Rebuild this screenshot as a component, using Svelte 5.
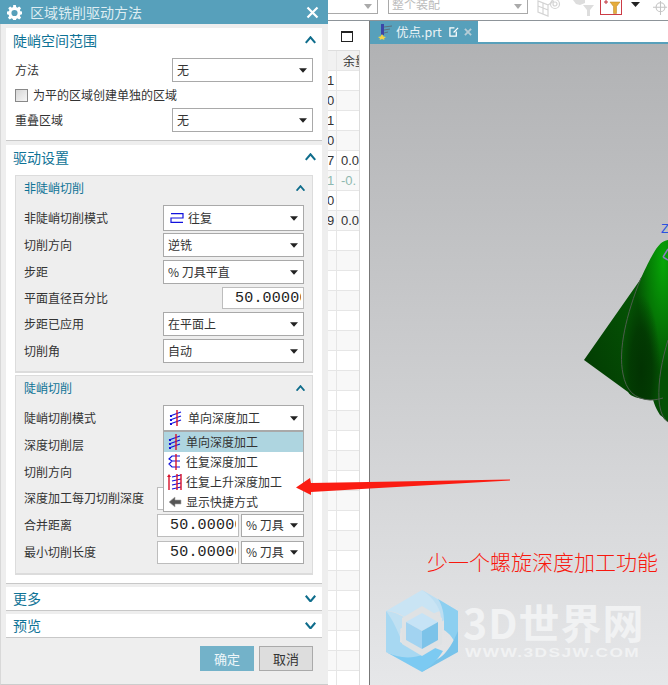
<script>
  // table rows beside the dialog
  const cells = [
    ['1', ''], ['0', ''], ['1', ''], ['0', ''],
    ['7', '0.0'], ['1', '-0.'], ['0', ''], ['9', '0.0']
  ];
  const rows = Array.from({ length: 31 }, (_, i) => cells[i] || ['', '']);
  const menu = ['单向深度加工', '往复深度加工', '往复上升深度加工', '显示快捷方式'];
</script>

{#snippet caret()}
  <svg class="caret" width="8" height="5" viewBox="0 0 9 5"><path d="M0 0h9L4.500 5z" fill="#222" /></svg>
{/snippet}

{#snippet chevron(up, size)}
  <svg width={size} height={size * 0.7} viewBox="0 0 10 7" fill="none" stroke="#0f6d8c" stroke-width="1.900">
    <path d={up ? 'M.7 6.300 5 1.200l4.300 5.100' : 'M.7.7 5 5.800 9.300.7'} />
  </svg>
{/snippet}

{#snippet deepIcon(kind)}
  <svg class="mode" width="16" height="18" viewBox="0 0 16 18" fill="none">
    {#if kind === 0}
      <path d="M2 7 13 3M2 11l11-4M2 15l11-4" stroke="#1111dd" stroke-width="1.300" />
      <path d="M2 7h2M2 11h2M2 15h2" stroke="#1111dd" stroke-width="2" />
      <path d="M9 1v16" stroke="#d8112a" stroke-width="1.400" />
    {:else if kind === 1}
      <path d="M13 3H5L2 6l3 2h8M13 8H5l-3 3 3 3h8" stroke="#1111dd" stroke-width="1.200" />
      <path d="M9 1v16" stroke="#d8112a" stroke-width="1.400" />
    {:else if kind === 2}
      <path d="M5 4l9-2M5 8l9-2M5 12l9-2M5 16l9-2" stroke="#1111dd" stroke-width="1.200" />
      <path d="M2 17V3M10 1v16M14 1v16" stroke="#d8112a" stroke-width="1.400" />
      <path d="M0 4l2-3 2 3z" fill="#d8112a" />
    {:else}
      <path d="M2 9l6-5v3h6v4H8v3z" fill="#555" stroke="#aaa" stroke-width=".6" />
    {/if}
  </svg>
{/snippet}

{#snippet select(text, cls = '')}
  <div class="select {cls}"><span class="val">{text}</span>{@render caret()}</div>
{/snippet}

<div class="screen">
  <div class="dialog">
    <header class="title">
      <svg width="15" height="15" viewBox="0 0 16 16">
        <path fill="#fff" fill-rule="evenodd" d="M6.600 0h2.800l.4 2.200 1.300.6L13 1.500l2 2-1.300 1.900.6 1.300 2.200.4v2.800l-2.200.4-.6 1.300L15 13.500l-2 2-1.900-1.300-1.300.6-.4 2.200H6.600l-.4-2.200-1.300-.6L3 15.500l-2-2 1.300-1.900-.6-1.300L-.2 9.900V7.100l2.200-.4.6-1.300L1.300 3.500l2-2 1.900 1.300 1.300-.6zM8 5.200a3.300 3.300 0 1 0 0 6.600 3.300 3.300 0 0 0 0-6.600z" />
      </svg>
      <span class="title-text">区域铣削驱动方法</span>
      <svg class="close" width="13" height="13" viewBox="0 0 13 13"><path d="M1.500 1.500l10 10M11.500 1.500l-10 10" stroke="#fff" stroke-width="2.200" /></svg>
    </header>

    <section class="card first">
      <div class="head"><span>陡峭空间范围</span>{@render chevron(true, 11)}</div>
      <div class="rows">
        <div class="row"><label>方法</label>{@render select('无')}</div>
        <div class="row check"><span class="box"></span><span>为平的区域创建单独的区域</span></div>
        <div class="row"><label>重叠区域</label>{@render select('无')}</div>
      </div>
    </section>

    <section class="card second">
      <div class="head"><span>驱动设置</span>{@render chevron(true, 11)}</div>

      <div class="group">
        <div class="group-head"><span>非陡峭切削</span>{@render chevron(true, 9)}</div>
        <div class="row tall">
          <label>非陡峭切削模式</label>
          <div class="select">
            <svg class="mode wave" width="14" height="10" viewBox="0 0 14 10" fill="none" stroke="#1111dd" stroke-width="1.200"><path d="M1 .6H13V5H1V9.400H13" /></svg>
            <span class="val">往复</span>{@render caret()}
          </div>
        </div>
        <div class="row"><label>切削方向</label>{@render select('逆铣')}</div>
        <div class="row"><label>步距</label>{@render select('% 刀具平直')}</div>
        <div class="row short"><label>平面直径百分比</label><input class="num wide" readonly value="50.000000" /></div>
        <div class="row"><label>步距已应用</label>{@render select('在平面上')}</div>
        <div class="row"><label>切削角</label>{@render select('自动')}</div>
      </div>

      <div class="group steep">
        <div class="group-head"><span>陡峭切削</span>{@render chevron(true, 9)}</div>
        <div class="row tall">
          <label>陡峭切削模式</label>
          <div class="select">{@render deepIcon(0)}<span class="val">单向深度加工</span>{@render caret()}</div>
        </div>
        <div class="row"><label>深度切削层</label></div>
        <div class="row"><label>切削方向</label></div>
        <div class="row mt"><label>深度加工每刀切削深度</label><input class="num" readonly value="50.000000" /><span class="pad"></span></div>
        <div class="row mt"><label>合并距离</label><input class="num" readonly value="50.000000" />{@render select('% 刀具', 'unit')}</div>
        <div class="row mt"><label>最小切削长度</label><input class="num" readonly value="50.000000" />{@render select('% 刀具', 'unit')}</div>

        <ul class="menu">
          {#each menu as item, i}
            <li class:on={i === 0}>{@render deepIcon(i)}<span>{item}</span></li>
          {/each}
        </ul>
      </div>
    </section>

    <section class="card fold"><div class="head"><span>更多</span>{@render chevron(false, 11)}</div></section>
    <section class="card fold"><div class="head"><span>预览</span>{@render chevron(false, 11)}</div></section>

    <footer class="actions">
      <button class="ok">确定</button>
      <button class="cancel">取消</button>
    </footer>
  </div>

  <div class="right">
    <div class="toolbar">
      <div class="tb-select first-sel"><span class="tb-caret"></span></div>
      <div class="tb-select second-sel"><span class="tb-text">整个装配</span><span class="tb-caret"></span></div>
      <svg class="tb-icon one" width="26" height="17" viewBox="0 0 26 17" fill="none" stroke="#d4d4d4" stroke-width="1.200">
        <path d="M2 1v11l10 4V5zM2 6l10 4M7 3v11M12 5l6-4" /><circle cx="19" cy="4" r="4.500" /><circle cx="19" cy="4" r="2" />
      </svg>
      <svg class="tb-icon two" width="24" height="17" viewBox="0 0 24 17">
        <path d="M1 0h12v3l-5 2-4-1z" fill="#ddd" /><path d="M11 5h11l-4 5v6h-3v-6z" fill="#ddd" />
      </svg>
      <div class="filter">
        <svg width="20" height="14" viewBox="0 0 20 14">
          <path d="M4 0v4M2 2h4" stroke="#c0303a" stroke-width="1" /><path d="M8 2h10l-3.500 4.500v7h-3v-7z" fill="#e6ad3c" stroke="#b98420" stroke-width=".5" />
        </svg>
      </div>
      <svg class="tb-icon three" width="9" height="5" viewBox="0 0 9 5"><path d="M0 0h9L4.500 5z" fill="#222" /></svg>
      <svg class="tb-icon four" width="15" height="17" viewBox="0 0 17 17" fill="none" stroke="#c4c4c4" stroke-width="1.200">
        <circle cx="8.500" cy="7" r="5" /><path d="M8.500 0v16M0 7h16" />
      </svg>
    </div>

    <div class="lower">
      <div class="side">
        <div class="side-top"><span class="maxi"></span></div>
        <div class="table">
          <div class="t-row t-head"><div class="c1"></div><div class="c2"><span>余量</span></div></div>
          {#each rows as r, i}
            <div class="t-row" class:alt={i % 2 === 1} class:dim={i === 5}>
              <div class="c1"><span>{r[0]}</span></div>
              <div class="c2"><span>{r[1]}</span></div>
            </div>
          {/each}
        </div>
      </div>

      <div class="view">
        <div class="tabs">
          <div class="tab">
            <svg width="17" height="17" viewBox="0 0 17 17">
              <path d="M5 1h3v11H5z" fill="#3c46a8" /><path d="M8 4l8-1M8 7l6-1M8 10l4-1" stroke="#5b6f7c" stroke-width="1" />
              <path d="M6 11l1.500 2.500L10 14l-2 1.500.5 1.500L6 16l-2.500 1 .5-1.500L2 14l2.500-.5z" fill="#f2d544" />
            </svg>
            <span class="tab-name">优点.prt</span>
            <svg width="10" height="10" viewBox="0 0 11 11" fill="none" stroke="#fff" stroke-width="1.400"><path d="M8 5v5H1V1h5M5 6l5-5" /></svg>
            <svg class="tab-x" width="8" height="8" viewBox="0 0 9 9"><path d="M1 1l7 7M8 1L1 8" stroke="#b7cdd6" stroke-width="2" /></svg>
          </div>
        </div>
        <div class="canvas">
          <!-- 3D part, placed on the free canvas -->
          <svg class="model" width="108" height="240" viewBox="0 0 108 240">
            <defs>
              <radialGradient id="lobe" cx="0.9" cy="0.12" r="0.6">
                <stop offset="0" stop-color="#07a607" />
                <stop offset="0.55" stop-color="#057a05" />
                <stop offset="1" stop-color="#045004" />
              </radialGradient>
              <linearGradient id="flat" x1="1" y1="0" x2="0" y2="1">
                <stop offset="0" stop-color="#066406" />
                <stop offset="1" stop-color="#023602" />
              </linearGradient>
              <radialGradient id="shade" cx="0.42" cy="0.72" r="0.42">
                <stop offset="0" stop-color="#023302" stop-opacity="1" />
                <stop offset="0.55" stop-color="#023302" stop-opacity="0.75" />
                <stop offset="1" stop-color="#023302" stop-opacity="0" />
              </radialGradient>
            </defs>
            <path d="M24 160 108 40V221L100 215C88 196 90 180 108 190L98 198C86 200 72 199 68 192z" fill="url(#flat)" />
            <path d="M81 78C66 115 58 150 63 174 66 190 74 199 90 200 96 200 99 199 103 198 100 215 102 218 108 222V40C100 41 95 48 81 78z" fill="url(#lobe)" />
            <path d="M81 78C66 115 58 150 63 174 66 190 74 199 90 200 96 200 99 199 103 198 100 215 102 218 108 222V40C100 41 95 48 81 78z" fill="url(#shade)" />
            <path d="M81 78C66 115 58 150 63 174 66 190 74 199 90 200 96 200 99 199 103 198M108 140C102 160 98 180 99 200 100 212 103 218 108 222" fill="none" stroke="#4d5c4d" stroke-width="1" />
            <path d="M103 57l5-8M103 57l5 3" fill="none" stroke="#8a7fc0" stroke-width="1.500" />
          </svg>
          <span class="axis">Z</span>

          <div class="note">少一个螺旋深度加工功能</div>

          <svg class="logo" width="74" height="84" viewBox="0 0 74 84">
            <path d="M37 1 73 22C62 19 52 22 44 27L37 23 24 31C15 24 8 22 1 22z" fill="#c9e4f4" />
            <path d="M37 1C50 10 57 21 56 33L73 22z" fill="#bcdef2" />
            <path d="M53 10 73 22V63C70 50 64 44 59 41V33C59 24 57 16 53 10z" fill="#8ccff0" />
            <path d="M73 63 37 83 42 74C52 72 62 68 73 42z" fill="#78c3ea" />
            <path d="M37 83 1 63C13 68 23 68 37 54L58 62C52 72 45 78 37 83z" fill="#7ccaf2" />
            <path d="M1 22C15 27 16 40 15 46V53L24 58 37 66C26 70 12 69 1 63z" fill="#a7d8f2" />
            <path d="M1 22C10 23 19 27 26 33L15 40V48C11 38 6 28 1 22z" fill="#c0e0f2" />
            <path d="M37 17 57 29V55L37 67 17 55V29z" fill="#dfe2e4" />
            <path d="M37 24 53 33 37 42 21 33z" fill="#c6e3f6" />
            <path d="M21 33 37 42V60L21 51z" fill="#a2d3f1" />
            <path d="M53 33 37 42V60L53 51z" fill="#7cc3e9" />
          </svg>
          <div class="brand">
            <div class="brand-name">3D世界网</div>
            <div class="brand-url">WWW.3DSJW.COM</div>
          </div>
        </div>
      </div>
    </div>
  </div>

  <!-- red callout drawn over dialog and view -->
  <svg class="arrow" width="225" height="24" viewBox="0 0 225 24">
    <path d="M0 13.500 14 4 15 9 214 5.500V6.500L74 14.500 15 18V21z" fill="#fb1c12" />
  </svg>
</div>

<style>
  :global(body) { margin: 0; }

  .screen {
    position: relative;
    display: flex;
    width: 668px;
    height: 685px;
    overflow: hidden;
    background: #fff;
    color: #333;
    font: 12px/1.2 "Noto Sans CJK SC", "Liberation Sans", sans-serif;
  }

  /* dialog */
  .dialog {
    box-sizing: border-box;
    flex: 0 0 328px;
    height: 685px;
    background: #eeeeee;
    border-bottom: 1px solid #ccc;
    border-left: 1px solid #d8d8d8;
  }
  .title {
    display: flex;
    align-items: center;
    height: 24px;
    margin-left: -1px;
    padding: 0 9px 0 7px;
    background: #57a0bb;
  }
  .title-text { margin-left: 8px; font-size: 14px; color: #deedf2; }
  .close { margin-left: auto; }

  .card {
    width: 316px;
    margin: 0 0 3px 5px;
    background: #fff;
    border-bottom: 1px solid #c8c8c8;
  }
  .first { margin-top: 4px; margin-bottom: 4px; height: 113px; box-sizing: border-box; }
  .second { height: 439px; box-sizing: border-box; }
  .fold { height: 23px; }
  .head {
    display: flex;
    align-items: center;
    justify-content: space-between;
    padding: 0 6px 0 7px;
    box-sizing: border-box;
    font-size: 14px;
    color: #0f7396;
  }
  .first .head, .second .head { height: 30px; padding-bottom: 6px; }
  .fold .head { height: 23px; }

  .rows { padding: 0 9px; }
  .row {
    display: flex;
    align-items: center;
    height: 24px;
    margin-bottom: 3px;
  }
  .row label { margin-right: auto; }
  .check { height: 20px; }
  .box {
    box-sizing: border-box;
    width: 13px;
    height: 13px;
    margin-right: 5px;
    border: 1px solid #888;
    background: linear-gradient(135deg, #d6d6d6, #f6f6f6);
  }
  .tall { height: 26px; margin-bottom: 2px; }
  .short { height: 22px; }
  .mt { height: 23px; margin-bottom: 4px; }

  .select {
    box-sizing: border-box;
    display: flex;
    align-items: center;
    flex: 0 0 141px;
    height: 100%;
    padding: 0 5px 0 4px;
    background: #fff;
    border: 1px solid #a9a9a9;
    color: #333;
  }
  .select.unit { flex: 0 0 63px; margin-left: 2px; }
  .caret { margin-left: auto; }
  .mode { flex: none; margin-right: 3px; }
  .select .mode { margin-right: 4px; }
  .select .wave { margin-left: 2px; }

  .group {
    position: relative;
    box-sizing: border-box;
    height: 198px;
    margin: 0 9px 2px 9px;
    padding: 0 8px;
    background: #eeeeee;
    border: 1px solid #dcdcdc;
    border-width: 1px 1px 2px;
  }
  .steep { height: 200px; margin-bottom: 0; }
  .group-head {
    display: flex;
    align-items: center;
    justify-content: space-between;
    height: 29px;
    padding: 0 0 5px;
    margin-right: -1px;
    box-sizing: border-box;
    color: #0f7396;
  }
  .num {
    box-sizing: border-box;
    width: 82px;
    height: 100%;
    padding: 0 2px 0 12px;
    font: 15px/1 "Liberation Mono", monospace;
    letter-spacing: .2px;
    color: #222;
    background: #fff;
    border: 1px solid #bdbdbd;
    outline: none;
  }
  .pad { flex: 0 0 65px; }

  .menu {
    position: absolute;
    top: 55px;
    left: 147px;
    box-sizing: border-box;
    width: 141px;
    height: 81px;
    margin: 0;
    padding: 0;
    list-style: none;
    background: #fff;
    border: 1px solid #a9a9a9;
  }
  .menu li {
    display: flex;
    align-items: center;
    height: 20px;
    padding-left: 3px;
  }
  .menu li.on { background: #aed5e0; }

  .actions {
    display: flex;
    justify-content: flex-end;
    gap: 5px;
    margin-top: 8px;
    padding-right: 15px;
  }
  .actions button {
    box-sizing: border-box;
    width: 54px;
    height: 25px;
    padding: 0;
    font: 13px "Noto Sans CJK SC", sans-serif;
  }
  .ok { background: #73b2c9; border: 0; color: #eef6f9; }
  .cancel { background: #dddddd; border: 1px solid #aaa; color: #333; }

  /* right side */
  .right { flex: 1; display: flex; flex-direction: column; min-width: 0; }
  .toolbar {
    position: relative;
    display: flex;
    align-items: flex-start;
    flex: none;
    height: 21px;
    box-sizing: border-box;
    background: #fff;
    border-bottom: 1px solid #8d9499;
  }
  .tb-select {
    flex: none;
    box-sizing: border-box;
    display: flex;
    align-items: center;
    height: 14px;
    border: 1px solid #a9a9a9;
    border-top: 0;
    color: #bbb;
  }
  .first-sel { width: 50px; border-left: 0; }
  .second-sel { width: 140px; margin-left: 10px; padding-left: 3px; }
  .tb-text { margin-top: -5px; }
  .tb-caret {
    margin-left: auto;
    margin-right: 5px;
    border: 4px solid transparent;
    border-top: 5px solid #aaa;
    border-bottom: 0;
  }
  .tb-icon { flex: none; }
  .one { margin-left: 8px; }
  .two { margin-left: 10px; }
  .filter {
    flex: none;
    box-sizing: border-box;
    width: 22px;
    height: 15px;
    margin-left: 4px;
    padding-left: 1px;
    border: 1px solid #cc3b45;
    border-top: 0;
  }
  .three { margin-left: 9px; margin-top: 2px; }
  .four { margin-left: 13px; }

  .lower { flex: 1; display: flex; min-height: 0; }
  .side {
    box-sizing: border-box;
    flex: 0 0 42px;
    overflow: hidden;
    border-right: 1px solid #777;
  }
  .side-top {
    display: flex;
    justify-content: flex-end;
    height: 29px;
    padding: 10px 16px 0 0;
    box-sizing: border-box;
  }
  .maxi {
    box-sizing: border-box;
    width: 12px;
    height: 11px;
    border: 1px solid #222;
    border-top-width: 2px;
  }
  .table {
    box-sizing: border-box;
    width: 32px;
    border-right: 1px solid #ddd;
    border-top: 1px solid #ddd;
  }
  .t-row {
    display: flex;
    box-sizing: border-box;
    height: 20px;
    font: 13px/19px "Liberation Sans", sans-serif;
    color: #333;
    border-bottom: 1px solid #e6e6e6;
  }
  .t-head { background: #f1f1f1; font: 12px/19px "Noto Sans CJK SC", sans-serif; }
  .alt { background: #f8f8f8; }
  .dim { color: #8fb8b0; }
  .c1 {
    flex: 0 0 9px;
    box-sizing: border-box;
    overflow: hidden;
    border-right: 1px solid #e6e6e6;
    white-space: nowrap;
  }
  .c1 span { margin-left: -1px; }
  .c2 { flex: 0 0 22px; overflow: hidden; padding-left: 4px; box-sizing: border-box; white-space: nowrap; }
  .t-head .c2 { padding-left: 6px; }

  .view { flex: 1; display: flex; flex-direction: column; min-width: 0; }
  .tabs {
    flex: none;
    box-sizing: border-box;
    height: 23px;
    background: #fff;
    border-bottom: 2px solid #57a0bb;
  }
  .tab {
    display: flex;
    align-items: center;
    box-sizing: border-box;
    width: 108px;
    height: 21px;
    padding-left: 6px;
    background: #57a0bb;
  }
  .tab-name { margin: 0 7px 0 3px; font-size: 12.5px; color: #eaf3f6; }
  .tab-x { margin-left: 5px; }

  .canvas {
    position: relative;
    flex: 1;
    background: linear-gradient(#b1b2b4, #e6e7e9);
  }
  .model { position: absolute; top: 156px; right: 0; }
  .axis {
    position: absolute;
    top: 177px;
    left: 291px;
    font: 13px "Liberation Sans", sans-serif;
    color: #2a52e0;
  }
  .note {
    position: absolute;
    top: 503px;
    left: 57px;
    font-size: 21px;
    line-height: 28px;
    font-weight: 300;
    color: #f8180e;
    white-space: nowrap;
  }
  .logo { position: absolute; top: 545px; left: 15px; }
  .brand { position: absolute; top: 554px; left: 93px; color: #f1f2f3; }
  .brand-name {
    font: 700 41px/46px "Noto Sans CJK SC", "Liberation Sans", sans-serif;
    letter-spacing: 1px;
    white-space: nowrap;
  }
  .brand-url {
    margin: 2px 0 0 2px;
    font: 700 12px/14px "Liberation Sans", sans-serif;
    letter-spacing: 1px;
    transform: scaleX(1.44);
    transform-origin: left;
    white-space: nowrap;
  }

  .arrow { position: absolute; top: 474px; left: 296px; }
</style>
